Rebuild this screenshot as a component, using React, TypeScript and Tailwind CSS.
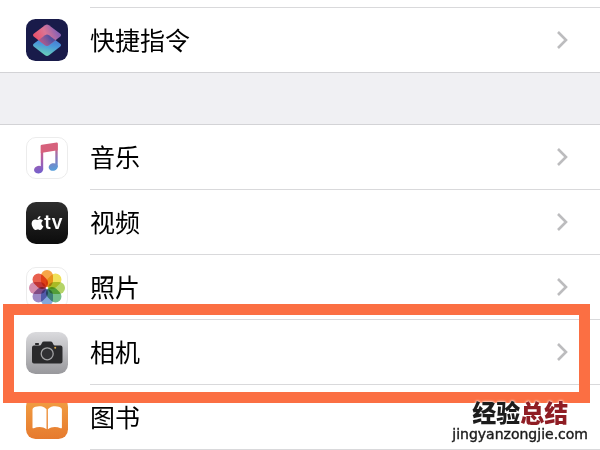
import type { ReactNode } from 'react';
import { FaApple } from 'react-icons/fa';

const ShortcutsIcon = () => (
  <svg viewBox="0 0 42 42" className="h-[42px] w-[42px]" aria-hidden="true">
    <defs>
      <linearGradient id="sc-top" x1="0.1" y1="0.7" x2="0.9" y2="0.4">
        <stop offset="0" stopColor="#e8526a" />
        <stop offset="0.5" stopColor="#dc7494" />
        <stop offset="1" stopColor="#8a62b4" />
      </linearGradient>
      <linearGradient id="sc-bottom" x1="0.7" y1="0" x2="0.4" y2="1">
        <stop offset="0" stopColor="#4668c8" />
        <stop offset="0.5" stopColor="#4a98dc" />
        <stop offset="1" stopColor="#6ad4b4" />
      </linearGradient>
      <linearGradient id="sc-fold" x1="0.15" y1="0.7" x2="0.75" y2="0.4">
        <stop offset="0" stopColor="#6a4ca0" stopOpacity="0" />
        <stop offset="1" stopColor="#54509e" />
      </linearGradient>
      <clipPath id="sc-clip">
        <path d="M19 6.3Q21 4.800 23 6.300L34 14.600Q36 16.200 34 17.800L23 26.300Q21 27.800 19 26.300L8 17.800Q6 16.200 8 14.600Z" />
      </clipPath>
    </defs>
    <rect width="42" height="42" rx="9.5" fill="#191b4a" />
    <path
      d="M19 16.300Q21 14.800 23 16.300L34 24.600Q36 26.200 34 27.800L23 36.300Q21 37.800 19 36.300L8 27.800Q6 26.200 8 24.600Z"
      fill="url(#sc-bottom)"
    />
    <path
      d="M19 6.300Q21 4.800 23 6.300L34 14.600Q36 16.200 34 17.800L23 26.300Q21 27.800 19 26.300L8 17.800Q6 16.200 8 14.600Z"
      fill="url(#sc-top)"
    />
    <path
      d="M19 16.300Q21 14.800 23 16.300L34 24.600L23 36L8 24.600Z"
      fill="url(#sc-fold)"
      clipPath="url(#sc-clip)"
    />
  </svg>
);

const MusicIcon = () => (
  <svg viewBox="0 0 42 42" className="h-[42px] w-[42px]" aria-hidden="true">
    <defs>
      <linearGradient id="mu-left" x1="0" y1="6" x2="0" y2="36" gradientUnits="userSpaceOnUse">
        <stop offset="0.2" stopColor="#d9607c" />
        <stop offset="0.6" stopColor="#a65fae" />
        <stop offset="1" stopColor="#7560cc" />
      </linearGradient>
      <linearGradient id="mu-right" x1="0" y1="6" x2="0" y2="34" gradientUnits="userSpaceOnUse">
        <stop offset="0.1" stopColor="#d9607c" />
        <stop offset="0.55" stopColor="#8a78bc" />
        <stop offset="1" stopColor="#55a0dc" />
      </linearGradient>
    </defs>
    <rect x="0.5" y="0.5" width="41" height="41" rx="9.5" fill="#fff" stroke="#ececec" />
    <path d="M14.800 8.400h2.400v24h-2.400z" fill="url(#mu-left)" />
    <ellipse cx="12.600" cy="32.600" rx="4.600" ry="3.800" fill="url(#mu-left)" transform="rotate(-14 12.600 32.600)" />
    <path d="M29.300 6.500h2.400v23.500h-2.400z" fill="url(#mu-right)" />
    <ellipse cx="27.200" cy="30" rx="4.600" ry="3.800" fill="url(#mu-right)" transform="rotate(-14 27.200 30)" />
    <path d="M14.800 8.800Q14.800 8 15.800 7.800L30.700 5.600Q31.700 5.500 31.700 6.500V13.300L14.800 16Z" fill="#d6617c" />
  </svg>
);

const TvIcon = () => (
  <span className="flex h-[42px] w-[42px] items-center justify-center rounded-[10px] bg-gradient-to-b from-[#2e2e2e] to-[#0c0c0c] text-white">
    <FaApple className="h-4 w-[13px]" aria-hidden="true" />
    <span className="font-['Inter'] text-[19px] leading-5 font-semibold">tv</span>
  </span>
);

const petals = ['#f7a648', '#f0e058', '#b4d468', '#74be8c', '#84a8dc', '#9c88c4', '#d48cac', '#e8604e'];

const PhotosIcon = () => (
  <svg viewBox="0 0 42 42" className="h-[42px] w-[42px]" aria-hidden="true">
    <rect x="0.5" y="0.5" width="41" height="41" rx="9.5" fill="#fff" stroke="#ececec" />
    {petals.map((color, i) => (
      <rect
        key={color}
        x="15"
        y="3"
        width="12"
        height="17"
        rx="6"
        fill={color}
        transform={`rotate(${i * 45} 21 21)`}
        className="mix-blend-multiply"
      />
    ))}
  </svg>
);

const CameraIcon = () => (
  <svg viewBox="0 0 42 42" className="h-[42px] w-[42px]" aria-hidden="true">
    <defs>
      <linearGradient id="cam-bg" x1="0" y1="0" x2="0" y2="1">
        <stop offset="0" stopColor="#dadadd" />
        <stop offset="1" stopColor="#98989c" />
      </linearGradient>
    </defs>
    <rect width="42" height="42" rx="9.5" fill="url(#cam-bg)" />
    <rect x="9" y="11" width="4" height="2" rx="0.8" fill="#2a2a2c" />
    <path
      d="M8 13.500H13.500Q14.800 13.500 15.300 12.300L16 10.800Q16.500 9.500 18 9.500H24.500Q26 9.500 26.600 10.800L27.300 12.300Q27.800 13.500 29 13.500H34.500Q36.500 13.500 36.500 15.500V29.500Q36.500 31.500 34.500 31.500H8Q6 31.500 6 29.500V15.500Q6 13.500 8 13.500Z"
      fill="#2a2a2c"
    />
    <circle cx="21.200" cy="21.800" r="6" fill="#303033" stroke="#a2a2a4" strokeWidth="1.300" />
    <circle cx="29.200" cy="15.700" r="1" fill="#e0b050" />
  </svg>
);

const BooksIcon = () => (
  <svg viewBox="0 0 42 42" className="h-[42px] w-[42px]" aria-hidden="true">
    <defs>
      <linearGradient id="bk-bg" x1="0" y1="0" x2="0" y2="1">
        <stop offset="0" stopColor="#f2a044" />
        <stop offset="1" stopColor="#e67a2e" />
      </linearGradient>
    </defs>
    <rect width="42" height="42" rx="9.5" fill="url(#bk-bg)" />
    <path
      d="M20.500 12.200C18.500 9.800 15.500 9.300 13.200 9.300C10.500 9.300 8.300 10 7.200 11Q6.500 11.500 6.500 12.500V30.500Q6.500 31.700 7.800 31.200C12 29.400 17 29.500 20.500 32.200Z"
      fill="#fff"
    />
    <path
      d="M21.900 12.200C23.900 9.800 26.900 9.300 29.200 9.300C31.900 9.300 34.100 10 35.200 11Q35.900 11.500 35.900 12.500V30.500Q35.900 31.700 34.600 31.200C30.400 29.400 25.400 29.500 21.900 32.200Z"
      fill="#fff"
    />
  </svg>
);

const Chevron = () => (
  <svg viewBox="0 0 12 20" className="h-5 w-3" fill="none" stroke="#bcbcbe" strokeWidth="2.600" aria-hidden="true">
    <path d="M2 2l8 8-8 8" />
  </svg>
);

type RowProps = {
  icon: ReactNode;
  label: string;
  last?: boolean;
  chevron?: boolean;
  highlighted?: boolean;
  children?: ReactNode;
};

const Row = ({ icon, label, last, chevron = true, highlighted, children }: RowProps) => (
  <li className="relative">
    <a href="#" className="flex items-stretch pl-[26px] text-black">
      <span className="flex w-16 items-center">{icon}</span>
      <span
        className={`flex flex-1 items-center justify-between pr-8 ${
          last ? 'h-16' : 'h-[65px] border-b border-[#d9d9db]'
        }`}
      >
        <span className="pb-[2px] text-[25px] leading-8">{label}</span>
        {chevron && <Chevron />}
      </span>
    </a>
    {highlighted && (
      <div className="pointer-events-none absolute -top-4 right-[10px] -bottom-[18px] left-[3px] z-10 border-[11px] border-[#fb6f43]" />
    )}
    {children}
  </li>
);

const Watermark = () => (
  <div className="pointer-events-none absolute right-3 bottom-2 z-20 text-center [text-shadow:0_0_2px_#fff,0_0_3px_#fff]">
    <p className="text-2xl leading-7 font-black text-[#1c1c1c]">
      经验<span className="text-[#8f1d24]">总结</span>
    </p>
    <p className="font-['DejaVu_Sans'] text-sm leading-4 text-[#1c1c1c] [-webkit-text-stroke:0.4px_#1c1c1c]">
      jingyanzongjie.com
    </p>
  </div>
);

const App = () => {
  return (
    <main className="overflow-hidden bg-white font-['Noto_Sans_CJK_SC',sans-serif]">
      {/* bottom edge of the row scrolled out above */}
      <div className="ml-[90px] h-2 border-b border-[#d9d9db]" />
      <ul>
        <Row icon={<ShortcutsIcon />} label="快捷指令" last />
      </ul>
      <div className="h-[53px] border-y border-[#d3d3d6] bg-[#f0f0f3]" />
      <ul>
        <Row icon={<MusicIcon />} label="音乐" />
        <Row icon={<TvIcon />} label="视频" />
        <Row icon={<PhotosIcon />} label="照片" />
        <Row icon={<CameraIcon />} label="相机" highlighted />
        <Row icon={<BooksIcon />} label="图书" chevron={false}>
          <Watermark />
        </Row>
      </ul>
    </main>
  );
};

export default App;
